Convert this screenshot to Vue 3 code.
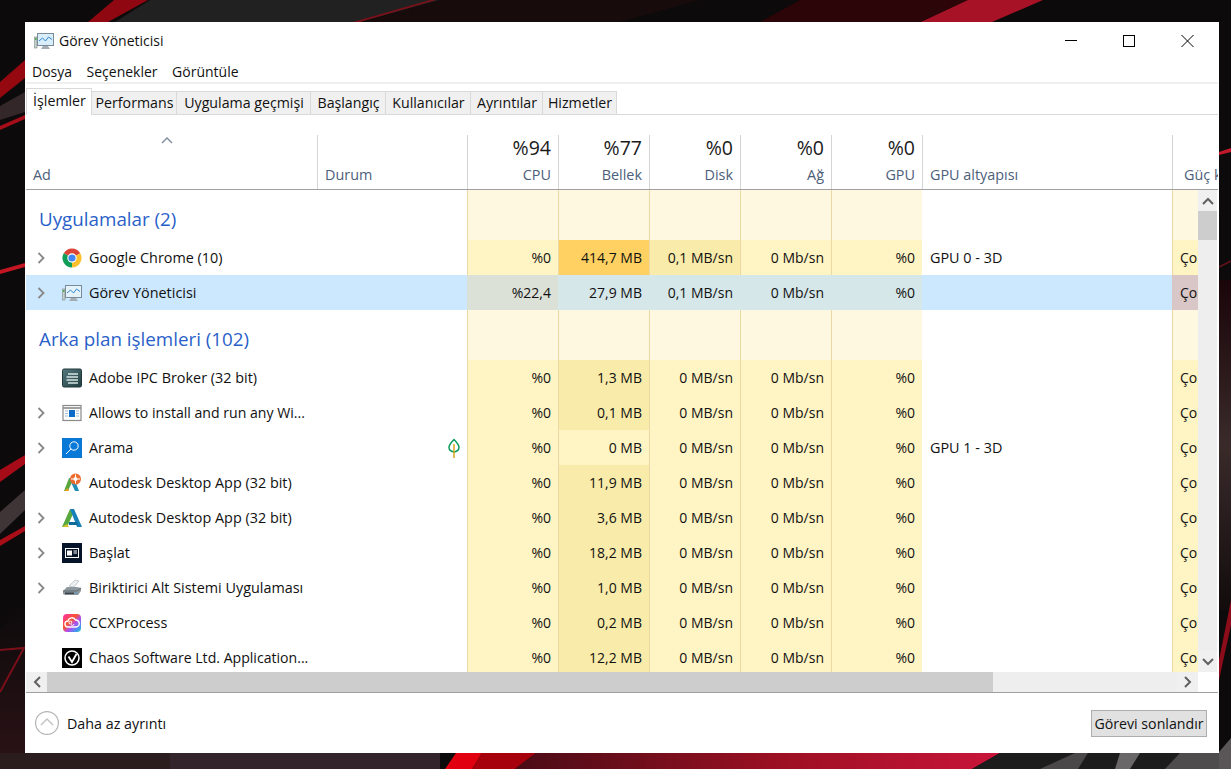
<template>
  <div class="desktop">
    <svg class="wallpaper" width="1231" height="769" viewBox="0 0 1231 769">
      <defs>
        <linearGradient id="bottomRed" x1="0" x2="1" y1="0" y2="0">
          <stop offset="0" stop-color="#4a0c16" />
          <stop offset="0.55" stop-color="#9c1022" />
          <stop offset="1" stop-color="#c9153a" />
        </linearGradient>
        <linearGradient id="rightGlow" x1="0" x2="0" y1="0" y2="1">
          <stop offset="0" stop-color="#1a0508" />
          <stop offset="0.5" stop-color="#3a2a2a" />
          <stop offset="1" stop-color="#120c0c" />
        </linearGradient>
        <linearGradient id="leftFade" x1="0" x2="0" y1="0" y2="1">
          <stop offset="0" stop-color="#0c0a0b" />
          <stop offset="1" stop-color="#2c1216" />
        </linearGradient>
      </defs>
      <rect width="1231" height="769" fill="#0c0a0b" />
      <!-- top -->
      <polygon points="150,0 440,0 360,22 115,22" fill="#222122" />
      <polygon points="114,0 148,0 108,22 88,22" fill="#8f0710" />
      <polygon points="430,0 436,0 360,22 353,22" fill="#7a1019" />
      <polygon points="440,0 700,0 620,22 362,22" fill="#170b0c" />
      <polygon points="800,0 968,0 921,22 760,22" fill="#2c0508" />
      <polygon points="968,0 1043,0 992,22 921,22" fill="#a81226" />
      <!-- left -->
      <polygon points="0,82 25,60 25,78 0,98" fill="#96080f" />
      <polygon points="0,106 25,92 25,112 0,120" fill="#332729" />
      <polygon points="0,126 25,115 25,119 0,130" fill="#a50d18" />
      <polygon points="0,270 25,263 25,267 0,274" fill="#c41622" />
      <polygon points="0,470 25,455 25,464 0,482" fill="#a80b18" />
      <polygon points="0,512 25,490 25,510 0,534" fill="#3f3436" />
      <polygon points="0,540 25,526 25,531 0,546" fill="#a80d18" />
      <polygon points="0,630 25,600 25,769 0,769" fill="url(#leftFade)" />
      <polyline points="0,650 24,648 0,692" fill="none" stroke="#7a0f1a" stroke-width="2" />
      <!-- right -->
      <rect x="1219" y="280" width="12" height="330" fill="url(#rightGlow)" />
      <polygon points="1219,152 1231,148 1231,152 1219,155" fill="#c2182c" />
      <polygon points="1219,266 1231,260 1231,262 1219,268" fill="#5c1018" />
      <polygon points="1219,660 1231,600 1231,625 1219,680" fill="#8c0c1a" />
      <polygon points="1219,769 1219,752 1231,738 1231,769" fill="#5a5556" />
      <!-- bottom -->
      <rect x="0" y="753" width="440" height="16" fill="#2b1c1e" />
      <rect x="170" y="753" width="270" height="16" fill="#33232a" />
      <polygon points="445,769 456,753 482,753 472,769" fill="#e0000f" />
      <polygon points="472,769 482,753 536,753 515,769" fill="#a5000c" />
      <polygon points="515,769 536,753 1000,753 972,769" fill="url(#bottomRed)" />
      <polygon points="972,769 1000,753 1219,753 1219,769" fill="#1d1c1c" />
      <polygon points="1040,769 1075,753 1088,753 1078,769" fill="#4a4849" />
      <polygon points="1115,769 1120,753 1140,753 1130,769" fill="#6a6768" />
      <polygon points="1165,769 1180,753 1219,753 1219,769" fill="#4e4c4d" />
    </svg>

    <div class="window">
      <div class="titlebar">
        <svg class="title-icon" width="20" height="20" viewBox="0 0 20 20">
          <rect x="0.500" y="6" width="2.500" height="11" fill="#c6d0cc" stroke="#7d8a86" stroke-width=".6" />
          <rect x="1" y="7" width="1.500" height="2" fill="#4caf50" />
          <rect x="3.500" y="2.500" width="16" height="12" fill="#d9eefb" stroke="#7a8c99" />
          <polyline points="5,10 8.500,7 11.500,10 14.500,6 18,8.500" fill="none" stroke="#3388cc" stroke-width="1" />
          <path d="M9 15h5l2 3H7z" fill="#a3adb3" />
        </svg>
        <span class="title-text">Görev Yöneticisi</span>
        <div class="win-buttons">
          <svg width="58" height="14" viewBox="0 0 58 14" class="btn-min"><path d="M0 6.500h12" stroke="#000" /></svg>
          <svg width="58" height="14" viewBox="0 0 58 14" class="btn-max"><rect x=".5" y="1.500" width="11" height="11" fill="none" stroke="#000" /></svg>
          <svg width="13" height="14" viewBox="0 0 13 14" class="btn-close"><path d="M.5 1l12 12M12.500 1l-12 12" stroke="#000" fill="none" /></svg>
        </div>
      </div>

      <div class="menu">
        <span v-for="m in menus" :key="m">{{ m }}</span>
      </div>

      <div class="tabs">
        <div v-for="(t, i) in tabs" :key="t.label" class="tab" :class="{ active: i === 0 }" :style="{ width: t.w + 'px' }">{{ t.label }}</div>
      </div>

      <div class="table-head cols">
        <svg class="sort-caret" width="12" height="7" viewBox="0 0 12 7"><path d="M1 6l5-5 5 5" fill="none" stroke="#7d8ba0" stroke-width="1.400" /></svg>
        <div class="hcell first"><span class="hlabel">Ad</span></div>
        <div class="hcell left"><span class="hlabel">Durum</span></div>
        <div v-for="c in usage" :key="c.label" class="hcell num">
          <span class="hvalue">{{ c.value }}</span>
          <span class="hlabel">{{ c.label }}</span>
        </div>
        <div class="hcell left"><span class="hlabel">GPU altyapısı</span></div>
        <div class="hcell left power"><span class="hlabel">Güç kullanımı</span></div>
      </div>

      <div class="body-wrap">
        <div class="rows">
          <template v-for="sec in sections" :key="sec.title">
            <div class="group cols">
              <div class="group-title">{{ sec.title }}</div>
              <div class="cell blank"></div>
              <div v-for="n in 5" :key="n" class="cell tint"></div>
              <div class="cell blank"></div>
              <div class="cell tint"></div>
            </div>
            <div v-for="r in sec.rows" :key="r.icon" class="row cols" :class="{ selected: r.selected }">
              <div class="name-cell">
                <svg class="chevron" width="10" height="14" viewBox="0 0 10 14">
                  <path v-if="r.expand" d="M2.500 2l5 5-5 5" fill="none" stroke="#888" stroke-width="1.800" />
                </svg>

                <svg class="app-icon" width="20" height="20" viewBox="0 0 20 20">
                  <g v-if="r.icon === 'chrome'">
                    <path d="M10 10L1.770 5.250A9.500 9.500 0 0 1 18.230 5.250Z" fill="#db4437" />
                    <path d="M10 10L10 19.500A9.500 9.500 0 0 1 1.770 5.250Z" fill="#0f9d58" />
                    <path d="M10 10L18.230 5.250A9.500 9.500 0 0 1 10 19.500Z" fill="#fbc02d" />
                    <circle cx="10" cy="10" r="4.700" fill="#fff" />
                    <circle cx="10" cy="10" r="3.600" fill="#4285f4" />
                  </g>
                  <g v-else-if="r.icon === 'taskmgr'">
                    <rect x="0.500" y="6" width="2.500" height="11" fill="#c6d0cc" stroke="#7d8a86" stroke-width=".6" />
                    <rect x="1" y="7" width="1.500" height="2" fill="#4caf50" />
                    <rect x="3.500" y="2.500" width="16" height="12" fill="#e4f2fb" stroke="#7a8c99" />
                    <polyline points="5,10 8.500,7 11.500,10 14.500,6 18,8.500" fill="none" stroke="#3388cc" stroke-width="1" />
                    <path d="M9 15h5l2 3H7z" fill="#a3adb3" />
                  </g>
                  <g v-else-if="r.icon === 'adobe'">
                    <defs>
                      <linearGradient id="ipcBg" x1="0" y1="0" x2="1" y2="1">
                        <stop offset="0" stop-color="#557a7e" />
                        <stop offset="1" stop-color="#1f3c40" />
                      </linearGradient>
                    </defs>
                    <rect x="0.500" y="1" width="19" height="18" rx="1.500" fill="url(#ipcBg)" stroke="#22393c" />
                    <path d="M6 6h10M4.500 9h11.500M4.500 12h11.500M6 15h10" stroke="#d7e4e4" stroke-width="1.500" />
                  </g>
                  <g v-else-if="r.icon === 'window'">
                    <rect x="1" y="2.500" width="18" height="15" fill="#fff" stroke="#8a8a8a" stroke-width="1.200" />
                    <path d="M1 5h18" stroke="#8a8a8a" stroke-width="1.600" />
                    <rect x="7" y="7" width="6" height="7" fill="#0a6cc8" />
                    <path d="M3 8h3M3 10.500h3M3 13h3M14 8h3M14 10.500h3M14 13h3" stroke="#9fb7cc" />
                  </g>
                  <g v-else-if="r.icon === 'search'">
                    <rect width="20" height="20" fill="#0a78d7" />
                    <circle cx="12" cy="8" r="4.200" fill="none" stroke="#fff" />
                    <path d="M9 11l-5 5" stroke="#fff" />
                  </g>
                  <g v-else-if="r.icon === 'autodesk-badge'">
                    <path d="M7 5L2 18h4l4-9z" fill="#5aa63c" />
                    <path d="M2 18l4-3 1 3z" fill="#e5a11c" />
                    <path d="M7 5h5l5 13h-4z" fill="#1f8fb8" />
                    <circle cx="13.500" cy="6" r="5.500" fill="#ee6b30" />
                    <circle cx="13.500" cy="6" r="2" fill="#fff" />
                    <path d="M13.500 1.500v9M9 6h9" stroke="#fff" stroke-width="1" />
                  </g>
                  <g v-else-if="r.icon === 'autodesk'">
                    <path d="M8 1L0 19h5L11 6z" fill="#57a83f" />
                    <path d="M0 19l5-3 2 3z" fill="#d8c22c" />
                    <path d="M8 1h4l8 18h-5z" fill="#1681b8" />
                    <path d="M7 14h8l1 3H7z" fill="#0f6a9a" />
                  </g>
                  <g v-else-if="r.icon === 'start'">
                    <rect width="20" height="20" fill="#06142a" />
                    <rect x="3.500" y="5.500" width="13" height="9" fill="none" stroke="#fff" />
                    <rect x="5" y="7.500" width="5" height="5" fill="#fff" />
                    <path d="M11.500 8h3.500M11.500 10h3.500" stroke="#fff" />
                  </g>
                  <g v-else-if="r.icon === 'printer'">
                    <path d="M7 8l6-6 4 1-5 6z" fill="#eceff1" stroke="#a5adb3" stroke-width=".6" />
                    <path d="M1 13l4-4h10l4 1v3l-3 4H3l-2-1z" fill="#8d979e" />
                    <path d="M1 13l14 0 4-3" fill="none" stroke="#5f686e" />
                    <rect x="3" y="14.500" width="9" height="1.600" fill="#3c4449" />
                    <path d="M13 15h1.500" stroke="#2f9be0" />
                  </g>
                  <g v-else-if="r.icon === 'ccx'">
                    <defs>
                      <linearGradient id="ccxBg" x1="0" y1="0" x2="1" y2="1">
                        <stop offset="0" stop-color="#ff2fb0" />
                        <stop offset="0.4" stop-color="#f8562c" />
                        <stop offset="0.6" stop-color="#b14cf0" />
                        <stop offset="0.85" stop-color="#3a9bf0" />
                        <stop offset="1" stop-color="#3fd2a0" />
                      </linearGradient>
                    </defs>
                    <rect x="1" y="1" width="18" height="18" rx="4" fill="url(#ccxBg)" />
                    <path d="M6 14a3 3 0 0 1 0-6 4 4 0 0 1 7.500-1A3.500 3.500 0 0 1 14 14z" fill="none" stroke="#fff" stroke-width="1.400" />
                    <path d="M8 11a1.500 1.500 0 1 1 2-1.500 1.500 1.500 0 1 0 2 1.500" fill="none" stroke="#fff" />
                  </g>
                  <g v-else-if="r.icon === 'chaos'">
                    <rect width="20" height="20" fill="#000" />
                    <circle cx="10" cy="10" r="7" fill="none" stroke="#fff" stroke-width="1.500" />
                    <path d="M6.500 8.500L10 14l4.500-8" fill="none" stroke="#fff" stroke-width="1.800" />
                  </g>
                </svg>

                <span class="app-name" :class="{ cut: r.name.endsWith('...') }">{{ r.name }}</span>
              </div>
              <div class="cell status">
                <svg v-if="r.leaf" class="leaf" width="12" height="20" viewBox="0 0 12 20">
                  <path d="M6 1.500C3 4.500 1 7 1 9.500S3.500 14 6 14s5-2 5-4.500S9 4.500 6 1.500z" fill="none" stroke="#0a9a58" stroke-width="1.500" />
                  <path d="M6 6v14" stroke="#d9a520" stroke-width="1.500" />
                </svg>
              </div>
              <div class="cell num" :class="r.selected ? 'sel-cpu' : 'h0'">{{ r.cpu }}</div>
              <div class="cell num" :class="r.selected ? 'sel' : 'h' + r.memHeat">{{ r.mem }}</div>
              <div class="cell num" :class="r.selected ? 'sel' : 'h' + r.diskHeat">{{ r.disk }}</div>
              <div class="cell num" :class="r.selected ? 'sel' : 'h0'">0 Mb/sn</div>
              <div class="cell num" :class="r.selected ? 'sel' : 'h0'">%0</div>
              <div class="cell engine">{{ r.engine }}</div>
              <div class="cell power-cell" :class="r.selected ? 'sel-power' : 'h0'">Çok düşük</div>
            </div>
          </template>
        </div>
        <div class="vscroll">
          <div class="sb-btn">
            <svg width="12" height="8" viewBox="0 0 12 8"><path d="M1 7l5-5 5 5" fill="none" stroke="#606060" stroke-width="2" /></svg>
          </div>
          <div class="vthumb"></div>
          <div class="vtrack"></div>
          <div class="sb-btn">
            <svg width="12" height="8" viewBox="0 0 12 8"><path d="M1 1l5 5 5-5" fill="none" stroke="#606060" stroke-width="2" /></svg>
          </div>
        </div>
      </div>

      <div class="hscroll">
        <div class="sb-btn side">
          <svg width="8" height="12" viewBox="0 0 8 12"><path d="M7 1L2 6l5 5" fill="none" stroke="#606060" stroke-width="2" /></svg>
        </div>
        <div class="hthumb"></div>
        <div class="htrack"></div>
        <div class="sb-btn side">
          <svg width="8" height="12" viewBox="0 0 8 12"><path d="M1 1l5 5-5 5" fill="none" stroke="#606060" stroke-width="2" /></svg>
        </div>
      </div>

      <div class="footer">
        <div class="less">
          <svg width="24" height="24" viewBox="0 0 24 24">
            <circle cx="12" cy="12" r="11.400" fill="none" stroke="#b4b4b4" stroke-width="1.200" />
            <path d="M6 14l6-6 6 6" fill="none" stroke="#c4c4c4" stroke-width="1.500" />
          </svg>
          <span>Daha az ayrıntı</span>
        </div>
        <button class="end-task">Görevi sonlandır</button>
      </div>
    </div>
  </div>
</template>

<script setup>
const menus = ['Dosya', 'Seçenekler', 'Görüntüle']

const tabs = [
  { label: 'İşlemler', w: 66 },
  { label: 'Performans', w: 85 },
  { label: 'Uygulama geçmişi', w: 134 },
  { label: 'Başlangıç', w: 75 },
  { label: 'Kullanıcılar', w: 85 },
  { label: 'Ayrıntılar', w: 72 },
  { label: 'Hizmetler', w: 74 }
]

const usage = [
  { value: '%94', label: 'CPU' },
  { value: '%77', label: 'Bellek' },
  { value: '%0', label: 'Disk' },
  { value: '%0', label: 'Ağ' },
  { value: '%0', label: 'GPU' }
]

const row = (name, icon, expand, mem, memHeat, extra = {}) => ({
  name, icon, expand, mem, memHeat,
  cpu: '%0', disk: '0 MB/sn', diskHeat: 0, engine: '',
  ...extra
})

const sections = [
  {
    title: 'Uygulamalar (2)',
    rows: [
      row('Google Chrome (10)', 'chrome', true, '414,7 MB', 3, { disk: '0,1 MB/sn', diskHeat: 1, engine: 'GPU 0 - 3D' }),
      row('Görev Yöneticisi', 'taskmgr', true, '27,9 MB', 0, { cpu: '%22,4', disk: '0,1 MB/sn', selected: true })
    ]
  },
  {
    title: 'Arka plan işlemleri (102)',
    rows: [
      row('Adobe IPC Broker (32 bit)', 'adobe', false, '1,3 MB', 1),
      row('Allows to install and run any Wi...', 'window', true, '0,1 MB', 1),
      row('Arama', 'search', true, '0 MB', 0, { engine: 'GPU 1 - 3D', leaf: true }),
      row('Autodesk Desktop App (32 bit)', 'autodesk-badge', false, '11,9 MB', 1),
      row('Autodesk Desktop App (32 bit)', 'autodesk', true, '3,6 MB', 1),
      row('Başlat', 'start', true, '18,2 MB', 1),
      row('Biriktirici Alt Sistemi Uygulaması', 'printer', true, '1,0 MB', 1),
      row('CCXProcess', 'ccx', false, '0,2 MB', 1),
      row('Chaos Software Ltd. Application...', 'chaos', false, '12,2 MB', 1)
    ]
  }
]
</script>

<style scoped>
.desktop {
  position: relative;
  width: 1231px;
  height: 769px;
  padding: 22px 12px 16px 25px;
  box-sizing: border-box;
  display: flex;
  overflow: hidden;
  font-family: "Open Sans", "Noto Sans", sans-serif;
  font-size: 14px;
  color: #111;
}
.wallpaper {
  position: absolute;
  top: 0;
  left: 0;
}
.window {
  position: relative;
  width: 1194px;
  height: 731px;
  padding: 0 1px;
  box-sizing: border-box;
  background: #fff;
  display: flex;
  flex-direction: column;
}
.titlebar {
  height: 38px;
  display: flex;
  align-items: center;
  padding-left: 8px;
  flex: none;
}
.title-text {
  margin-left: 5px;
  margin-top: -2px;
}
.win-buttons {
  margin-left: auto;
  display: flex;
  align-items: center;
  padding-right: 24px;
}
.btn-min { margin-top: -1px; }

.menu {
  height: 22px;
  flex: none;
  display: flex;
  gap: 14.500px;
  padding-left: 6px;
  align-items: center;
  border-bottom: 2px solid #f0f0f0;
}
.tabs {
  height: 30px;
  flex: none;
  display: flex;
  align-items: flex-end;
  border-bottom: 1px solid #d9d9d9;
  font-size: 14.200px;
}
.tab {
  height: 23px;
  box-sizing: border-box;
  background: #f0f0f0;
  border: 1px solid #d9d9d9;
  border-left: 0;
  border-bottom: 0;
  line-height: 22px;
  padding-left: 1px;
  text-align: center;
  white-space: nowrap;
}
.tab.active {
  height: 27px;
  margin-bottom: -1px;
  background: #fff;
  border-left: 1px solid #d9d9d9;
  line-height: 24px;
  position: relative;
}

.cols {
  display: grid;
  grid-template-columns: 291px 150px repeat(5, 91px) 250px 1fr;
}
.table-head {
  position: relative;
  height: 75px;
  flex: none;
  box-sizing: border-box;
  border-bottom: 1px solid #a0a0a0;
  padding-top: 20px;
}
.sort-caret {
  position: absolute;
  left: 135px;
  top: 22px;
}
.hcell {
  display: flex;
  flex-direction: column;
  justify-content: flex-end;
  padding-bottom: 4px;
  border-left: 1px solid #d4d4d4;
  overflow: hidden;
  white-space: nowrap;
}
.hcell.first {
  border-left: 0;
  padding-left: 7px;
}
.hcell.left { padding-left: 7px; }
.hcell.power { padding-left: 11px; }
.hcell.num {
  align-items: flex-end;
  padding-right: 7px;
}
.hvalue {
  font-size: 19.500px;
  line-height: 24px;
  margin-bottom: 5px;
  color: #1a1a1a;
}
.hlabel {
  line-height: 20px;
  font-size: 14.400px;
  color: #4c607a;
}

.body-wrap {
  height: 482px;
  flex: none;
  display: flex;
  overflow: hidden;
  padding-right: 1px;
}
.rows {
  width: 1172px;
  flex: none;
  overflow: hidden;
}
.group {
  height: 50px;
}
.group-title {
  color: #2a5fc9;
  font-size: 18.800px;
  line-height: 50px;
  padding: 4px 0 0 13px;
  box-sizing: border-box;
  height: 50px;
  white-space: nowrap;
}
.row {
  height: 35px;
}
.cell {
  line-height: 35px;
  overflow: hidden;
  white-space: nowrap;
}
.tint {
  background: #fff8e1;
  border-left: 1px solid #ecd8a4;
}
.row .num {
  text-align: right;
  padding-right: 7px;
  border-left: 1px solid #ecd8a4;
}
.engine {
  padding-left: 8px;
  font-size: 14.400px;
}
.power-cell {
  padding-left: 7px;
  border-left: 1px solid #ecd8a4;
}
.status {
  display: flex;
  align-items: center;
  justify-content: flex-end;
  padding-right: 7px;
}
.h0 { background: #fff4c4; }
.h1 { background: #f9ecaa; }
.h3 { background: #ffd162; }

.name-cell {
  display: flex;
  align-items: center;
  padding-left: 10px;
  white-space: nowrap;
  font-size: 14.400px;
}
.chevron { flex: none; }
.app-icon {
  flex: none;
  margin-left: 16px;
}
.app-name {
  margin-left: 7px;
}
.app-name.cut {
  font-size: 14.100px;
}
.leaf {
  flex: none;
}
.selected {
  background: #cce8ff;
}
.selected .num,
.selected .power-cell {
  border-left-color: transparent;
}
.sel { background: #d6e7e9; }
.sel-cpu { background: #dce1d8; }
.sel-power { background: #d9c6c6; }

.vscroll {
  width: 19px;
  flex: none;
  display: flex;
  flex-direction: column;
  background: #eeeeee;
}
.sb-btn {
  height: 21px;
  flex: none;
  display: flex;
  align-items: center;
  justify-content: center;
  background: #f0f0f0;
}
.sb-btn.side {
  width: 21px;
  height: 20px;
}
.vthumb {
  height: 29px;
  flex: none;
  background: #cdcdcd;
}
.vtrack {
  flex: 1;
}
.hscroll {
  width: 1172px;
  height: 20px;
  flex: none;
  display: flex;
  background: #eeeeee;
}
.hthumb {
  width: 946px;
  flex: none;
  background: #cdcdcd;
}
.htrack {
  flex: 1;
}
.footer {
  flex: 1;
  border-top: 1px solid #a0a0a0;
  display: flex;
  align-items: center;
  padding: 0 11px 0 9px;
}
.less {
  display: flex;
  align-items: center;
  gap: 8px;
  font-size: 14.300px;
}
.end-task {
  margin-left: auto;
  width: 116px;
  height: 27px;
  padding: 0;
  background: #e1e1e1;
  border: 1px solid #adadad;
  font: inherit;
  font-size: 14.200px;
  color: #111;
}
</style>

<style>
html, body {
  margin: 0;
  overflow: hidden;
  background: #0c0a0b;
}
</style>
